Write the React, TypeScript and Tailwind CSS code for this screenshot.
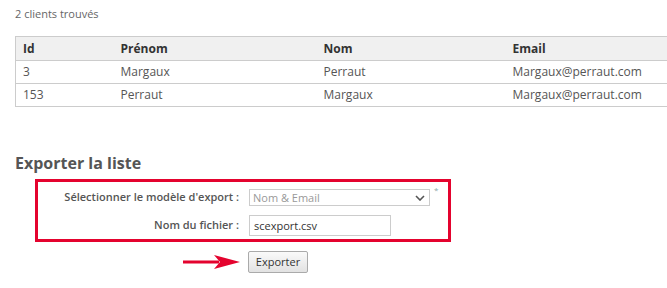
import React from "react";

const rows = [
  { id: "3", prenom: "Margaux", nom: "Perraut", email: "Margaux@perraut.com" },
  { id: "153", prenom: "Perraut", nom: "Margaux", email: "Margaux@perraut.com" },
];

export default function App() {
  return (
    <div
      className="w-[667px] h-[288px] overflow-hidden bg-white"
      style={{ fontFamily: '"Open Sans", "Noto Sans", sans-serif' }}
    >
      <div className="pl-[15px] pt-[6px]">
        <p className="text-[11px] leading-[15px] text-[#666]">2 clients trouvés</p>

        <table className="mt-[15px] w-[680px] border-collapse border border-[#ccc] text-[12px] table-fixed">
          <colgroup>
            <col className="w-[98px]" />
            <col className="w-[203px]" />
            <col className="w-[189px]" />
            <col />
          </colgroup>
          <thead>
            <tr className="h-[24px] bg-[#f0f0f0]">
              <th className="px-[7px] text-left font-bold text-[#333]">Id</th>
              <th className="px-[7px] text-left font-bold text-[#333]">Prénom</th>
              <th className="px-[7px] text-left font-bold text-[#333]">Nom</th>
              <th className="px-[7px] text-left font-bold text-[#333]">Email</th>
            </tr>
          </thead>
          <tbody>
            {rows.map((r) => (
              <tr key={r.id} className="h-[23px] border-t border-[#ccc] text-[#555]">
                <td className="px-[7px]">{r.id}</td>
                <td className="px-[7px]">{r.prenom}</td>
                <td className="px-[7px]">{r.nom}</td>
                <td className="px-[7px]">{r.email}</td>
              </tr>
            ))}
          </tbody>
        </table>

        <h2 className="mt-[45px] text-[16px] leading-[22px] font-bold text-[#555]">Exporter la liste</h2>

        <div className="ml-[20px] mt-[5px] w-[416px] border-[3px] border-[#e4032e] pt-[7px] pb-[3px]">
          <div className="flex items-center h-[17px]">
            <label className="w-[202px] pr-[1px] text-right text-[11px] font-semibold text-[#555]">
              Sélectionner le modèle d'export :
            </label>
            <div className="ml-[9px] flex items-start">
              <div className="flex h-[17px] w-[181px] items-center justify-between border border-[#ccc] bg-white pl-[3px] pr-[4px]">
                <span className="text-[11px] leading-none text-[#999]">Nom &amp; Email</span>
                <svg width="10" height="6" viewBox="0 0 10 6">
                  <path d="M1 1 L5 5 L9 1" fill="none" stroke="#555" strokeWidth="1.6" />
                </svg>
              </div>
              <span className="ml-[4px] -mt-[3px] text-[8px] leading-none text-[#8aa]">*</span>
            </div>
          </div>
          <div className="mt-[9px] flex items-center h-[21px]">
            <label className="w-[202px] pr-[1px] text-right text-[11px] font-semibold text-[#555]">
              Nom du fichier :
            </label>
            <div className="ml-[9px] flex h-[21px] w-[142px] items-center border border-[#ccc] bg-white pl-[4px]">
              <span className="text-[11px] leading-none text-[#333]">scexport.csv</span>
            </div>
          </div>
        </div>

        <div className="mt-[9px] flex items-center pl-[168px]">
          <svg width="58" height="16" viewBox="0 0 58 16">
            <rect x="0" y="6.5" width="36" height="3" fill="#e4032e" />
            <path d="M31 1 L57 8 L31 15 L37 8 Z" fill="#e4032e" />
          </svg>
          <button className="ml-[7px] flex h-[22px] w-[60px] items-center justify-center rounded-[2px] border border-[#aaa] bg-gradient-to-b from-[#fafafa] to-[#e2e2e2] text-[11px] text-[#333]">
            Exporter
          </button>
        </div>
      </div>
    </div>
  );
}
